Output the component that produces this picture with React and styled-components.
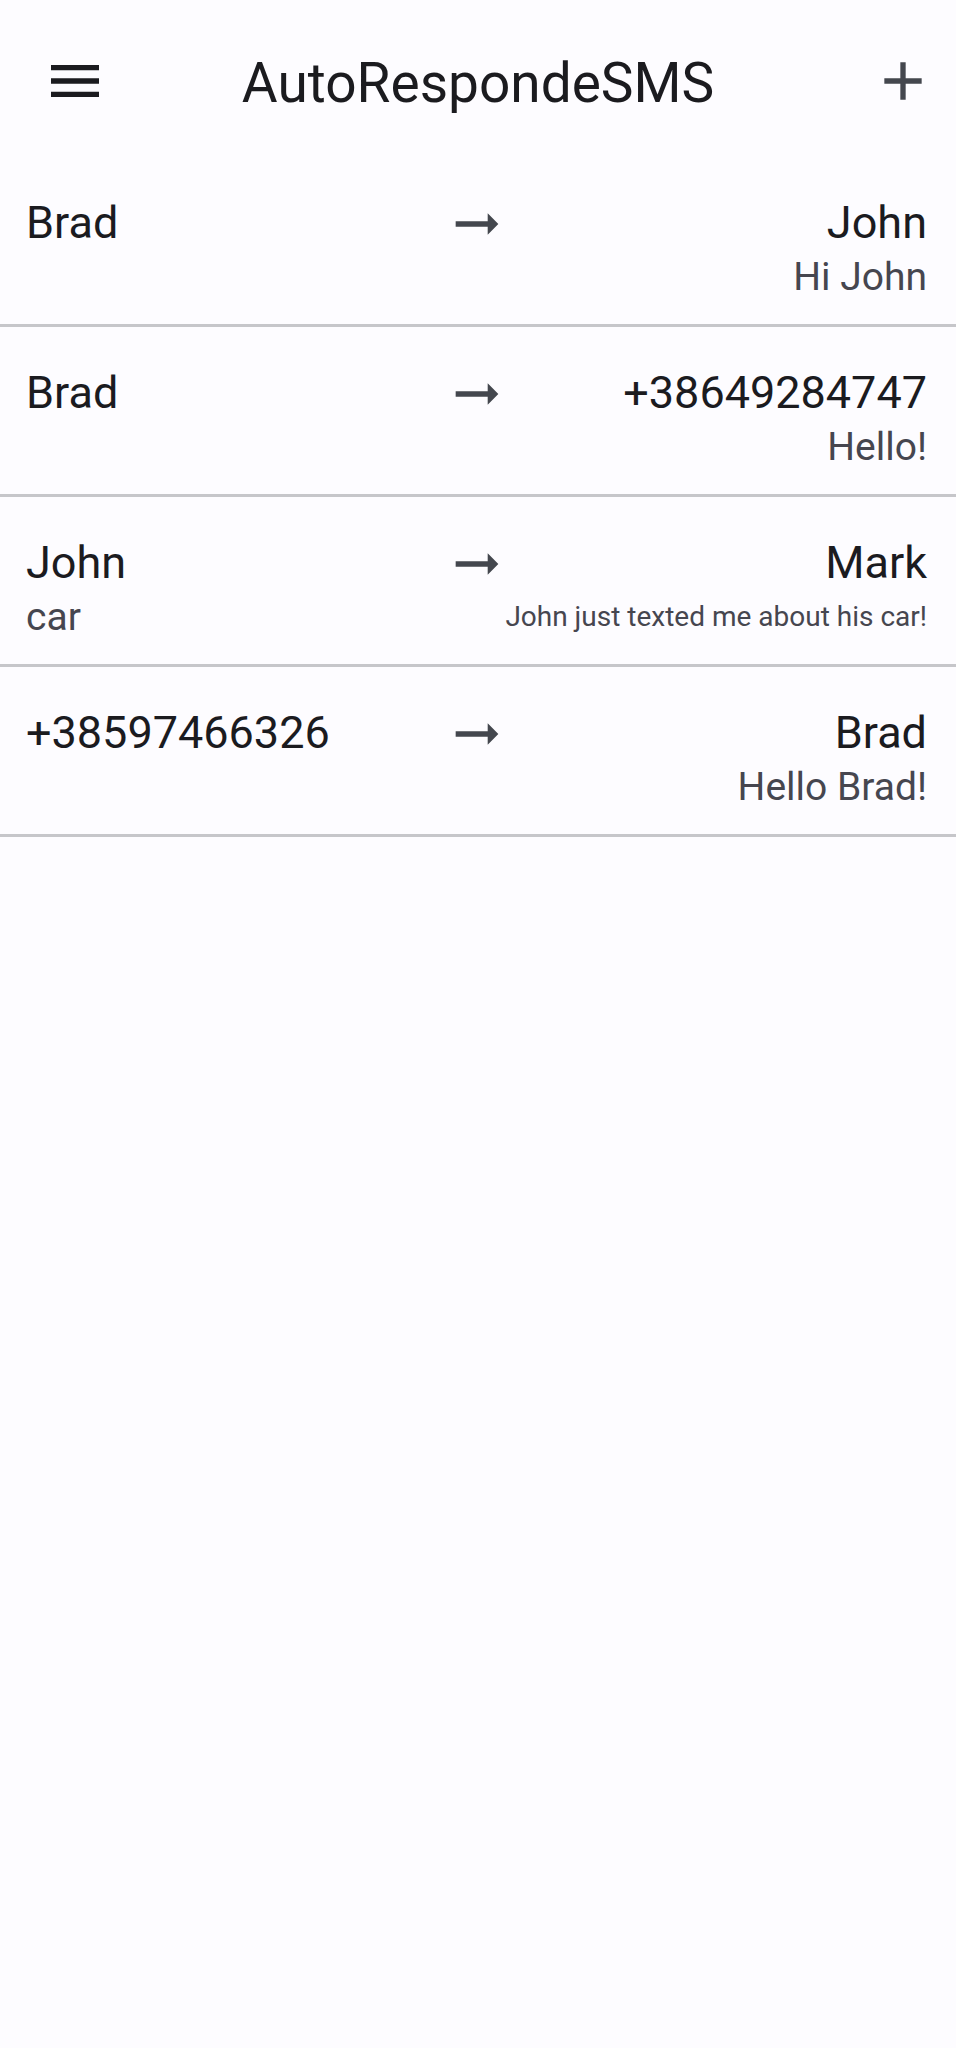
import React from "react"
import styled, { createGlobalStyle } from "styled-components"

const GlobalStyle = createGlobalStyle`
  html, body {
    margin: 0;
    padding: 0;
    background: #fdfcff;
  }
  body {
    font-family: Roboto, "Noto Sans", sans-serif;
    color: #1b1b1f;
  }
`

const Page = styled.div`
  width: 956px;
  min-height: 2048px;
  background: #fdfcff;
`

const AppBar = styled.header`
  display: grid;
  grid-template-columns: 1fr auto 1fr;
  align-items: center;
  height: 157px;
  box-sizing: border-box;
  padding-top: 5px;
`

const IconSlot = styled.div`
  display: flex;
  justify-content: ${(p) => (p.$end ? "flex-end" : "flex-start")};
  padding: ${(p) => (p.$end ? "0 21px 0 0" : "0 0 0 43px")};
`

const Icon = styled.svg`
  width: 64px;
  height: 64px;
  display: block;
  fill: ${(p) => p.$color || "#1b1b1f"};
`

const Title = styled.h1`
  margin: 0;
  padding-top: 3px;
  font-size: 55px;
  line-height: 64px;
  font-weight: 400;
  color: #1b1b1f;
  white-space: nowrap;
`

const RuleList = styled.ul`
  list-style: none;
  margin: 0;
  padding: 0;
`

const RuleRow = styled.li`
  display: grid;
  grid-template-columns: 1fr auto 1fr;
  align-items: start;
  height: 170px;
  box-sizing: border-box;
  padding: 40px 29px 0 26px;
  border-bottom: 3px solid #c6c6ca;
`

const Side = styled.div`
  display: flex;
  flex-direction: column;
  align-items: ${(p) => (p.$right ? "flex-end" : "flex-start")};
  text-align: ${(p) => (p.$right ? "right" : "left")};
  min-width: 0;
`

const Name = styled.span`
  font-size: 45px;
  line-height: 52px;
  color: #1b1b1f;
  white-space: nowrap;
`

const Note = styled.span`
  margin-top: 6px;
  font-size: ${(p) => (p.$small ? "28px" : "39px")};
  line-height: 44px;
  color: #46464f;
  white-space: nowrap;
`

const Arrow = styled(Icon)`
  margin-top: -5px;
`

const rules = [
  { from: "Brad", to: "John", message: "Hi John" },
  { from: "Brad", to: "+38649284747", message: "Hello!" },
  {
    from: "John",
    keyword: "car",
    to: "Mark",
    message: "John just texted me about his car!",
    small: true,
  },
  { from: "+38597466326", to: "Brad", message: "Hello Brad!" },
]

const MenuIcon = () => (
  <Icon viewBox="0 0 24 24">
    <path d="M3 18h18v-2H3v2zm0-5h18v-2H3v2zm0-7v2h18V6H3z" />
  </Icon>
)

const AddIcon = () => (
  <Icon viewBox="0 0 24 24" $color="#44474e">
    <path d="M19 13h-6v6h-2v-6H5v-2h6V5h2v6h6v2z" />
  </Icon>
)

const App = () => {
  return (
    <Page>
      <GlobalStyle />
      <AppBar>
        <IconSlot>
          <MenuIcon />
        </IconSlot>
        <Title>AutoRespondeSMS</Title>
        <IconSlot $end>
          <AddIcon />
        </IconSlot>
      </AppBar>

      <RuleList>
        {rules.map((rule, i) => (
          <RuleRow key={`rule${i}`}>
            <Side>
              <Name>{rule.from}</Name>
              {rule.keyword && <Note>{rule.keyword}</Note>}
            </Side>
            <Arrow viewBox="0 0 24 24" $color="#44474e">
              <path d="M16.01 11H4v2h12.01v3L20 12l-3.99-4z" />
            </Arrow>
            <Side $right>
              <Name>{rule.to}</Name>
              <Note $small={rule.small}>{rule.message}</Note>
            </Side>
          </RuleRow>
        ))}
      </RuleList>
    </Page>
  )
}

export default App
